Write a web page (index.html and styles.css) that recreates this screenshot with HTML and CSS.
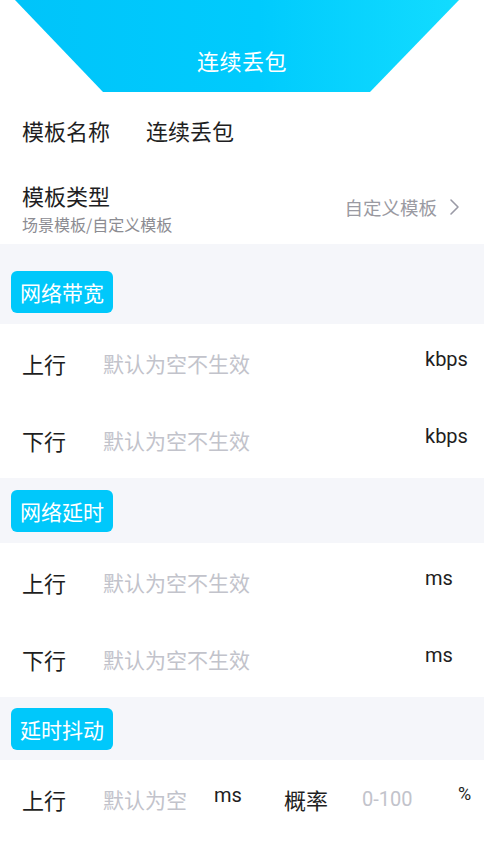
FILE: index.html
```html
<!DOCTYPE html>
<html lang="zh">
<head>
<meta charset="utf-8">
<title>连续丢包</title>
<link rel="stylesheet" href="styles.css">
</head>
<body>
<div class="page">
  <header class="header">
    <div class="banner"><span class="banner-title">连续丢包</span></div>
  </header>

  <div class="row row-name">
    <span class="label">模板名称</span>
    <span class="value">连续丢包</span>
  </div>

  <div class="row row-type">
    <div class="type-left">
      <span class="label">模板类型</span>
      <span class="sub">场景模板/自定义模板</span>
    </div>
    <div class="type-right">
      <span class="type-value">自定义模板</span>
      <svg class="chevron" width="12" height="18" viewBox="0 0 12 18"><path d="M3 2 L10 9 L3 16" fill="none" stroke="#9a9aa6" stroke-width="1.6" stroke-linecap="round" stroke-linejoin="round"/></svg>
    </div>
  </div>

  <div class="section section-first"><span class="badge">网络带宽</span></div>
  <div class="row field">
    <span class="label">上行</span>
    <span class="placeholder">默认为空不生效</span>
    <span class="unit">kbps</span>
  </div>
  <div class="row field">
    <span class="label">下行</span>
    <span class="placeholder">默认为空不生效</span>
    <span class="unit">kbps</span>
  </div>

  <div class="section"><span class="badge">网络延时</span></div>
  <div class="row field">
    <span class="label">上行</span>
    <span class="placeholder">默认为空不生效</span>
    <span class="unit">ms</span>
  </div>
  <div class="row field">
    <span class="label">下行</span>
    <span class="placeholder">默认为空不生效</span>
    <span class="unit">ms</span>
  </div>

  <div class="section section-last"><span class="badge">延时抖动</span></div>
  <div class="row field jitter">
    <span class="label">上行</span>
    <span class="placeholder ph-short">默认为空</span>
    <span class="unit unit-ms">ms</span>
    <span class="label label-prob">概率</span>
    <span class="placeholder ph-num">0-100</span>
    <span class="unit unit-pct">%</span>
  </div>
</div>
</body>
</html>
```

FILE: styles.css
```css
html, body {
  margin: 0;
  padding: 0;
  background: #ffffff;
}
body {
  font-family: "Noto Sans CJK SC", "Noto Sans", Roboto, sans-serif;
  color: #1e1e22;
  width: 484px;
  overflow: hidden;
}
.page {
  display: flex;
  flex-direction: column;
}
.header {
  height: 92px;
  display: flex;
  padding-left: 15px;
  padding-right: 25px;
}
.banner {
  flex: 1;
  height: 92px;
  background: linear-gradient(90deg, #00c4fa 0%, #00cbfd 55%, #12dcff 100%);
  clip-path: polygon(0 0, 100% 0, calc(100% - 89px) 100%, 88px 100%);
  display: flex;
  align-items: flex-end;
  justify-content: center;
  padding-left: 10px;
  box-sizing: border-box;
}
.banner-title {
  color: #ffffff;
  font-size: 22px;
  line-height: 30px;
  margin-bottom: 17px;
  letter-spacing: 0.5px;
}
.row {
  display: flex;
  align-items: center;
  padding-left: 22px;
  box-sizing: border-box;
}
.label {
  font-size: 22px;
  line-height: 30px;
  color: #1e1e22;
}
.row-name {
  height: 76px;
}
.row-name .label {
  width: 124px;
}
.value {
  font-size: 22px;
  line-height: 30px;
  color: #1e1e22;
}
.row-type {
  height: 76px;
  justify-content: space-between;
  padding-right: 24px;
}
.type-left {
  display: flex;
  flex-direction: column;
  padding-top: 2px;
}
.sub {
  font-size: 16px;
  line-height: 22px;
  color: #8c8c92;
  margin-top: 3px;
}
.type-right {
  display: flex;
  align-items: center;
  gap: 11px;
  padding-top: 2px;
}
.type-value {
  font-size: 18.5px;
  line-height: 26px;
  color: #9a9aa2;
}
.chevron {
  display: block;
}
.section {
  background: #f5f6fa;
  padding: 12px 11px 11px;
  display: flex;
}
.section-first {
  padding-top: 27px;
}
.section-last {
  padding-top: 11px;
  padding-bottom: 10px;
}
.badge {
  background: #00c8fb;
  color: #ffffff;
  border-radius: 6px;
  font-size: 21px;
  line-height: 42px;
  height: 42px;
  padding: 0 8px;
  width: 102px;
  box-sizing: border-box;
  text-align: center;
  letter-spacing: 0;
}
.field {
  height: 77px;
}
.field .label {
  width: 81px;
  flex: none;
}
.placeholder {
  flex: 1;
  font-size: 21px;
  line-height: 30px;
  color: #c2c3cb;
}
.unit {
  width: 59px;
  flex: none;
  font-family: Roboto, "Noto Sans", sans-serif;
  font-size: 20px;
  line-height: 28px;
  color: #1e1e22;
  margin-bottom: 8px;
}
.jitter .ph-short {
  flex: none;
  width: 111px;
}
.jitter .unit-ms {
  width: 70px;
}
.jitter .label-prob {
  width: 78px;
}
.jitter .ph-num {
  flex: none;
  width: 96px;
  font-family: Roboto, "Noto Sans", sans-serif;
  font-size: 20px;
}
.jitter .unit-pct {
  width: auto;
  font-size: 18px;
  margin-bottom: 10px;
}
```
